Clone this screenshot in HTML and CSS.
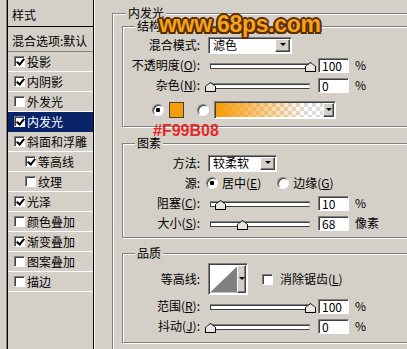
FILE: index.html
```html
<!DOCTYPE html>
<html lang="zh-CN">
<head>
    <meta charset="UTF-8">
    <title>图层样式 - 内发光</title>
    <link rel="stylesheet" href="styles.css">
</head>
<body>
    <div class="styles">
        <div class="styles-head">样式</div>
        <div class="styles-blend">混合选项:默认</div>
        <div class="item"><span class="chk on"></span>投影</div>
        <div class="item"><span class="chk on"></span>内阴影</div>
        <div class="item"><span class="chk"></span>外发光</div>
        <div class="item sel"><span class="chk on"></span>内发光</div>
        <div class="item"><span class="chk on"></span>斜面和浮雕</div>
        <div class="item sub"><span class="chk on"></span>等高线</div>
        <div class="item sub"><span class="chk"></span>纹理</div>
        <div class="item"><span class="chk on"></span>光泽</div>
        <div class="item"><span class="chk"></span>颜色叠加</div>
        <div class="item"><span class="chk on"></span>渐变叠加</div>
        <div class="item"><span class="chk"></span>图案叠加</div>
        <div class="item"><span class="chk"></span>描边</div>
    </div>

    <div class="main">
        <div class="grp outer">
            <span class="grp-title">内发光</span>

            <div class="grp struct">
                <span class="grp-title">结构</span>
                <div class="row">
                    <span class="lbl">混合模式:</span>
                    <div class="select blend"><span class="val">滤色</span><span class="drop"></span></div>
                </div>
                <div class="row">
                    <span class="lbl">不透明度(<u>O</u>):</span>
                    <div class="slider"><div class="track"></div><span class="thumb" style="left: 95px"></span></div>
                    <span class="num">100</span><span class="unit">%</span>
                </div>
                <div class="row">
                    <span class="lbl">杂色(<u>N</u>):</span>
                    <div class="slider"><div class="track"></div><span class="thumb" style="left: -5px"></span></div>
                    <span class="num">0</span><span class="unit">%</span>
                </div>
                <div class="row colors">
                    <span class="radio on"></span>
                    <span class="swatch"></span>
                    <span class="radio"></span>
                    <div class="gradient"><span class="grad-fill"></span><span class="drop"></span></div>
                </div>
            </div>

            <div class="grp pattern">
                <span class="grp-title">图素</span>
                <div class="row">
                    <span class="lbl">方法:</span>
                    <div class="select method"><span class="val">较柔软</span><span class="drop"></span></div>
                </div>
                <div class="row">
                    <span class="lbl">源:</span>
                    <span class="radio on src"></span><span class="opt">居中(<u>E</u>)</span>
                    <span class="radio src2"></span><span class="opt">边缘(<u>G</u>)</span>
                </div>
                <div class="row">
                    <span class="lbl">阻塞(<u>C</u>):</span>
                    <div class="slider"><div class="track"></div><span class="thumb" style="left: 5px"></span></div>
                    <span class="num">10</span><span class="unit">%</span>
                </div>
                <div class="row">
                    <span class="lbl">大小(<u>S</u>):</span>
                    <div class="slider"><div class="track"></div><span class="thumb" style="left: 27px"></span></div>
                    <span class="num">68</span><span class="unit">像素</span>
                </div>
            </div>

            <div class="grp quality">
                <span class="grp-title">品质</span>
                <div class="row tall">
                    <span class="lbl">等高线:</span>
                    <div class="contour">
                        <svg width="30" height="29" viewBox="0 0 30 29">
                            <rect width="30" height="29" fill="#fff"/>
                            <polygon points="0,29 30,0 30,29" fill="#808080"/>
                        </svg>
                        <span class="drop"></span>
                    </div>
                    <span class="chk aa"></span><span>消除锯齿(<u>L</u>)</span>
                </div>
                <div class="row">
                    <span class="lbl">范围(<u>R</u>):</span>
                    <div class="slider"><div class="track"></div><span class="thumb" style="left: 95px"></span></div>
                    <span class="num">100</span><span class="unit">%</span>
                </div>
                <div class="row">
                    <span class="lbl">抖动(<u>J</u>):</span>
                    <div class="slider"><div class="track"></div><span class="thumb" style="left: -5px"></span></div>
                    <span class="num">0</span><span class="unit">%</span>
                </div>
            </div>
        </div>
    </div>

    <div class="watermark">www.68ps.com</div>
    <div class="hex">#F99B08</div>
</body>
</html>
```

FILE: styles.css
```css
* {
    box-sizing: border-box;
}

body {
    margin: 0;
    width: 407px;
    height: 349px;
    overflow: hidden;
    position: relative;
    display: flex;
    background: #d4d0c8;
    color: #000;
    font: 12px/14px "Noto Sans CJK SC", sans-serif;
}

u {
    text-decoration: underline;
    text-underline-offset: 1px;
}

/* left list of styles */
.styles {
    flex: none;
    margin-left: 7px;
    width: 87px;
    height: 360px;
    border-left: 1px solid #000;
    border-right: 1px solid #000;
    box-shadow: -1px 0 0 #808080, 1px 0 0 #fff;
}

.styles-head {
    height: 27px;
    padding-left: 4px;
    line-height: 29px;
    border-bottom: 1px solid #000;
}

.styles-blend {
    height: 25px;
    padding: 4px 0 0 4px;
    line-height: 20px;
    border-bottom: 1px solid #808080;
    white-space: nowrap;
}

.item {
    display: flex;
    align-items: center;
    height: 20px;
    padding-left: 6px;
    border-bottom: 1px solid #fff;
    white-space: nowrap;
}

.item.sub {
    padding-left: 17px;
}

.item.sel {
    background: #0a246a;
    color: #fff;
    border-bottom-color: #0a246a;
}

.chk {
    position: relative;
    flex: none;
    width: 11px;
    height: 11px;
    margin-right: 2px;
    background: #fff;
    border: 1px solid;
    border-color: #808080 #fff #fff #808080;
    box-shadow: inset 1px 1px 0 #404040;
}

.chk.on::after {
    content: "";
    position: absolute;
    left: 3px;
    top: 0;
    width: 3px;
    height: 6px;
    border: solid #000;
    border-width: 0 2px 2px 0;
    transform: rotate(40deg);
}

/* right side group boxes */
.main {
    flex: none;
    margin-left: 18px;
}

.grp {
    position: relative;
    border: 1px solid #808080;
    box-shadow: inset 1px 1px 0 #fff, 1px 1px 0 #fff;
}

.grp-title {
    position: absolute;
    top: -8px;
    left: 12px;
    padding: 0 2px;
    background: #d4d0c8;
    line-height: 14px;
}

.outer {
    margin-top: 13px;
    width: 340px;
    height: 400px;
    padding: 12px 0 0 9px;
}

.outer > .grp-title {
    left: 13px;
}

.struct,
.pattern,
.quality {
    width: 330px;
}

.struct {
    height: 101px;
    padding-top: 8px;
}

.pattern {
    margin-top: 16px;
    height: 95px;
    padding-top: 9px;
}

.quality {
    margin-top: 15px;
    height: 90px;
    padding-top: 8px;
}

.row {
    display: flex;
    align-items: center;
    height: 20px;
    white-space: nowrap;
}

.row.tall {
    height: 34px;
}

.lbl {
    flex: none;
    width: 77px;
    margin-right: 8px;
    text-align: right;
}

/* controls */
.select,
.gradient,
.contour,
.num {
    background: #fff;
    border: 1px solid;
    border-color: #808080 #fff #fff #808080;
    box-shadow: inset 1px 1px 0 #404040;
}

.select {
    display: flex;
    align-items: center;
    height: 17px;
    padding: 1px;
}

.select .val {
    padding-left: 3px;
}

.blend {
    width: 84px;
}

.method {
    width: 69px;
}

.drop {
    position: relative;
    flex: none;
    margin-left: auto;
    width: 15px;
    height: 100%;
    background: #d4d0c8;
    border: 1px solid;
    border-color: #fff #404040 #404040 #fff;
    box-shadow: inset -1px -1px 0 #808080;
}

.drop::after {
    content: "";
    position: absolute;
    left: 50%;
    top: 50%;
    margin: -2px 0 0 -3px;
    border: 3px solid transparent;
    border-top: 3px solid #000;
    border-bottom: 0;
}

.slider {
    position: relative;
    flex: none;
    width: 100px;
    height: 14px;
    margin-left: 2px;
}

.track {
    margin-top: 6px;
    height: 5px;
    background: #fff;
    border: 1px solid;
    border-color: #404040 #d4d0c8 #404040 #404040;
    box-shadow: 0 -1px 0 #808080;
}

.thumb {
    position: absolute;
    top: 4px;
    width: 11px;
    height: 10px;
    background: #000;
    clip-path: polygon(0 45%, 50% 0, 100% 45%, 100% 100%, 0 100%);
}

.thumb::after {
    content: "";
    position: absolute;
    inset: 1px;
    background: #e8e6e0;
    clip-path: polygon(0 42%, 50% 0, 100% 42%, 100% 100%, 0 100%);
}

.num {
    flex: none;
    width: 31px;
    height: 15px;
    margin-left: 8px;
    padding-left: 3px;
    line-height: 13px;
}

.unit {
    margin-left: 6px;
}

.radio {
    flex: none;
    width: 12px;
    height: 12px;
    border-radius: 50%;
    background: #fff;
    border: 1px solid;
    border-color: #808080 #fff #fff #808080;
    box-shadow: inset 1px 1px 0 #404040;
}

.radio.on {
    background: radial-gradient(circle, #000 0 2px, #fff 2.5px);
}

.colors {
    height: 29px;
    padding-left: 29px;
}

.swatch {
    flex: none;
    width: 15px;
    height: 16px;
    margin: 0 13px 0 5px;
    background: #f99b08;
    border: 1px solid #404040;
}

.gradient {
    display: flex;
    width: 122px;
    height: 18px;
    margin-left: 5px;
    padding: 1px;
}

.grad-fill {
    flex: 1;
    background:
        linear-gradient(to right, #f99b08 0%, rgba(249, 155, 8, 0.6) 35%, rgba(249, 155, 8, 0) 85%),
        repeating-conic-gradient(#fff 0 25%, #dcdcdc 0 50%) 0 0 / 8px 8px;
}

.gradient .drop {
    width: 11px;
}

.src {
    margin-left: -2px;
}

.opt {
    margin-left: 4px;
}

.src2 {
    margin-left: 16px;
}

.contour {
    display: flex;
    flex: none;
    width: 40px;
    height: 32px;
    padding: 1px;
}

.contour svg {
    display: block;
}

.contour .drop {
    width: 9px;
}

.chk.aa {
    margin: 0 7px 0 14px;
}

/* overlays on the screenshot */
.watermark {
    position: absolute;
    left: 159px;
    top: 13px;
    font: bold 23px/23px "Liberation Sans", Arial, sans-serif;
    letter-spacing: -0.3px;
    color: #f5a31a;
    text-shadow:
        2px 0 0 #5a2c00, -2px 0 0 #5a2c00, 0 2px 0 #5a2c00, 0 -2px 0 #5a2c00,
        1.5px 1.5px 0 #5a2c00, -1.5px 1.5px 0 #5a2c00, 1.5px -1.5px 0 #5a2c00, -1.5px -1.5px 0 #5a2c00;
}

.hex {
    position: absolute;
    left: 153px;
    top: 123px;
    font: bold 16px/16px "Liberation Sans", Arial, sans-serif;
    color: #e52929;
}
```
